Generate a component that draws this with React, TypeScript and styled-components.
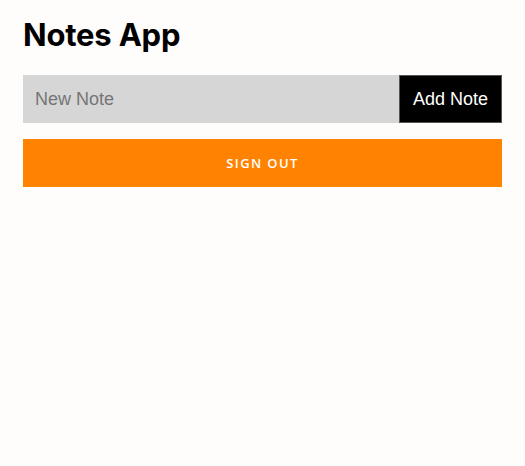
import React, { useState } from 'react';
import styled, { createGlobalStyle } from 'styled-components';

const GlobalStyle = createGlobalStyle`
  body {
    margin: 0;
    background: #fefdfb;
    font-family: "Liberation Sans", Arial, sans-serif;
  }
`;

const Page = styled.div`
  padding: 16px 23px;
  width: 479px;
`;

const Title = styled.h1`
  margin: 0 0 21px;
  font-family: Inter, "Liberation Sans", sans-serif;
  font-size: 31px;
  font-weight: 700;
  line-height: 38px;
  color: #000;
  letter-spacing: -0.2px;
`;

const Form = styled.form`
  display: flex;
  height: 48px;
  margin-bottom: 16px;
`;

const Input = styled.input`
  flex: 1;
  min-width: 0;
  border: none;
  background: #d6d6d6;
  padding: 0 12px;
  font-family: "Liberation Sans", Arial, sans-serif;
  font-size: 18px;
  color: #333;
  outline: none;

  ::placeholder {
    color: #6b6b6b;
  }
`;

const AddButton = styled.button`
  width: 103px;
  border: 1px solid #555;
  background: #000;
  color: #fff;
  font-family: "Liberation Sans", Arial, sans-serif;
  font-size: 18px;
  padding: 0;
  cursor: pointer;
`;

const SignOut = styled.button`
  display: block;
  width: 100%;
  height: 48px;
  border: none;
  background: #ff8300;
  color: #fff;
  font-family: "Open Sans", sans-serif;
  font-size: 13px;
  font-weight: 600;
  letter-spacing: 1.4px;
  text-transform: uppercase;
  cursor: pointer;
`;

export default function App() {
  const [note, setNote] = useState('');
  return (
    <>
      <GlobalStyle />
      <Page>
        <Title>Notes App</Title>
        <Form onSubmit={e => e.preventDefault()}>
          <Input placeholder="New Note" value={note} onChange={e => setNote(e.target.value)} />
          <AddButton type="submit">Add Note</AddButton>
        </Form>
        <SignOut>Sign Out</SignOut>
      </Page>
    </>
  );
}
